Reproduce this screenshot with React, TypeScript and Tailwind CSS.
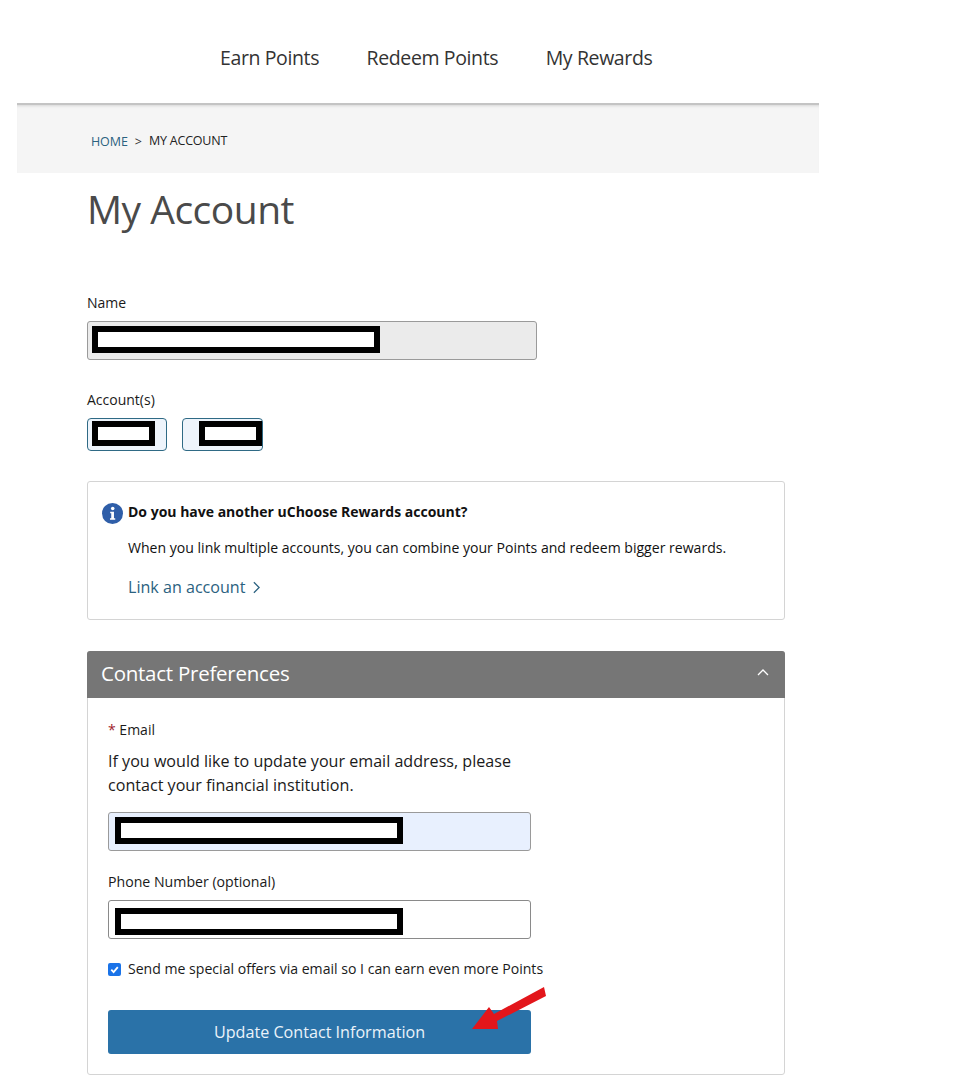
import React from "react";

function Redact({ w, h = 27 }: { w: number; h?: number }) {
  return <div className="box-border shrink-0 border-[6px] border-black bg-white" style={{ width: w, height: h }} />;
}

export default function App() {
  return (
    <div className="relative h-[1088px] w-[976px] overflow-hidden bg-white font-['Open_Sans','Noto_Sans',sans-serif] text-[#1a1a1a]">
      <nav className="flex h-[103px] w-[819px] items-center pt-[13px] pl-[220px] text-[19.5px] tracking-[-0.38px] text-[#333]">
        <span>Earn Points</span>
        <span className="ml-[47.5px]">Redeem Points</span>
        <span className="ml-[47.5px]">My Rewards</span>
      </nav>

      <div className="ml-[17px] flex h-[70px] w-[802px] items-center gap-[7px] border-t-2 border-[#c4c4c4] bg-[#f5f5f5] pt-[6px] pl-[74px] text-[12.5px] shadow-[inset_0_3px_3px_-2px_rgba(0,0,0,0.12)]">
        <span className="tracking-[-0.1px] text-[#2b6280]">HOME</span>
        <span className="text-[#333]">&gt;</span>
        <span className="-translate-y-px tracking-[-0.2px] text-[#222]">MY ACCOUNT</span>
      </div>

      <main className="w-[785px] pl-[87px]">
        <h1 className="mt-[8px] text-[39px] leading-[56px] font-normal tracking-[-0.5px] text-[#4a4a4a]">My Account</h1>

        <label className="mt-[55px] block text-[14px] leading-[22px]">Name</label>
        <div className="mt-[7px] box-border flex h-[39px] w-[450px] items-center rounded-[3px] border border-[#9a9a9a] bg-[#ebebeb] pb-[3px] pl-[4px]">
          <Redact w={288} />
        </div>

        <label className="mt-[29px] block text-[14px] leading-[22px]">Account(s)</label>
        <div className="mt-[7px] flex gap-[15px]">
          <div className="box-border flex h-[33px] w-[80px] items-center rounded-[4px] border border-[#2f6a85] bg-[#eef4fb] pb-[2px] pl-[4px]">
            <Redact w={63} h={25} />
          </div>
          <div className="box-border flex h-[33px] w-[81px] items-center rounded-[4px] border border-[#2f6a85] bg-[#eef4fb] pb-[2px] pl-[16px]">
            <Redact w={63} h={25} />
          </div>
        </div>

        <section className="mt-[30px] box-border h-[139px] w-[698px] rounded-[3px] border border-[#d4d4d4] pt-[19px] pl-[14px]">
          <div className="flex items-start gap-[5px]">
            <svg viewBox="0 0 20 20" className="mt-[2px] size-[21px] shrink-0">
              <circle cx="10" cy="10" r="10" fill="#2f5ea8" />
              <circle cx="10.2" cy="5.2" r="1.7" fill="#fff" />
              <path d="M7.8 8.3h3.6v6.2h1.2v1.5H7.6v-1.5h1.2V9.8h-1z" fill="#fff" />
            </svg>
            <div>
              <p className="text-[14px] leading-[22px] font-bold text-[#111]">Do you have another uChoose Rewards account?</p>
              <p className="mt-[14px] text-[14.07px] leading-[22px] text-[#111]">
                When you link multiple accounts, you can combine your Points and redeem bigger rewards.
              </p>
              <p className="mt-[16px] flex items-center gap-[8px] text-[16.1px] leading-[24px] text-[#2b6280]">
                Link an account
                <svg viewBox="0 0 8 14" className="h-[13px] w-[7px]" fill="none" stroke="#2b6280" strokeWidth="1.5">
                  <path d="M1 1l6 6-6 6" />
                </svg>
              </p>
            </div>
          </div>
        </section>

        <section className="mt-[31px] box-border h-[424px] w-[698px] rounded-[3px] border border-[#d4d4d4]">
          <header className="-mx-px -mt-px flex h-[47px] items-center justify-between rounded-t-[3px] bg-[#767676] pr-[16px] pl-[14px] text-white">
            <h2 className="-translate-y-px text-[20.5px] font-normal tracking-[-0.25px]">Contact Preferences</h2>
            <svg viewBox="0 0 12 7" className="mb-[5px] h-[7px] w-[12px]" fill="none" stroke="#fff" strokeWidth="1.3">
              <path d="M1 6l5-5 5 5" />
            </svg>
          </header>

          <div className="pl-[20px]">
            <label className="mt-[21px] block text-[14px] leading-[22px]">
              <span className="text-[#a01c2c]">*</span> Email
            </label>
            <p className="mt-[8px] w-[420px] text-[16.1px] leading-[24px] text-[#1a1a1a]">
              If you would like to update your email address, please contact your financial institution.
            </p>
            <div className="mt-[15px] box-border flex h-[39px] w-[423px] items-center rounded-[3px] border border-[#9a9a9a] bg-[#e8f0fe] pb-[3px] pl-[6px]">
              <Redact w={288} />
            </div>
            <label className="mt-[20px] block text-[14.15px] leading-[22px]">Phone Number (optional)</label>
            <div className="mt-[7px] box-border flex h-[39px] w-[423px] items-center rounded-[3px] border border-[#8a8a8a] bg-white pt-[3px] pl-[6px]">
              <Redact w={288} />
            </div>
            <div className="mt-[19px] flex items-center gap-[7px] text-[14.08px] leading-[22px]">
              <span className="flex size-[13px] items-center justify-center rounded-[2px] bg-[#1a73e8]">
                <svg viewBox="0 0 12 12" className="size-[11px]" fill="none" stroke="#fff" strokeWidth="2">
                  <path d="M2.5 6.2l2.5 2.6 4.6-5.4" />
                </svg>
              </span>
              <span>Send me special offers via email so I can earn even more Points</span>
            </div>
            <button className="mt-[30px] block h-[44px] w-[423px] rounded-[3px] bg-[#2a72a8] text-center text-[16.15px] text-[#eaf3fa]">
              Update Contact Information
            </button>
          </div>
        </section>
      </main>

      <svg viewBox="0 0 80 50" className="absolute top-[985px] left-[470px] h-[50px] w-[80px]">
        <path d="M74 2L24 29 19 22 2 44 28 44 27 36 76 11Z" fill="#e3161b" />
      </svg>
    </div>
  );
}
